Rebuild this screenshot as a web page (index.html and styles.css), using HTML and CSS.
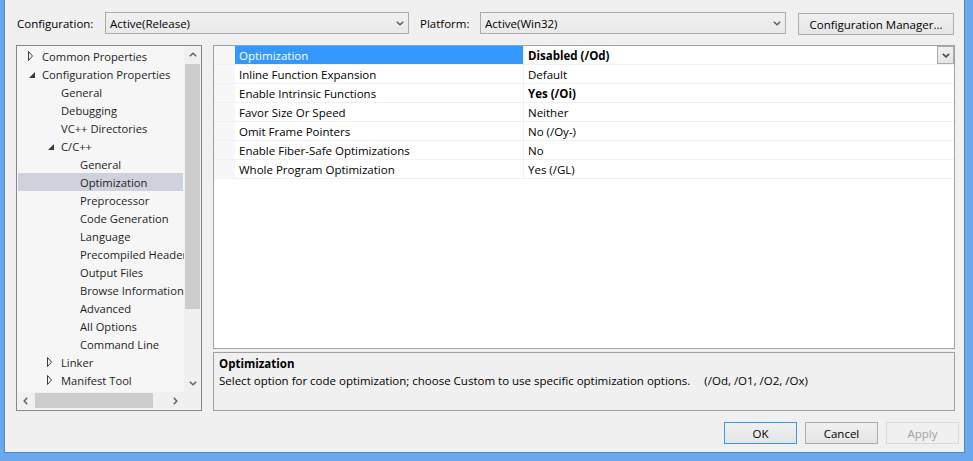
FILE: index.html
```html
<!DOCTYPE html>
<html>
<head>
<meta charset="utf-8">
<link rel="stylesheet" href="styles.css">
</head>
<body>
<div class="window">
  <div class="toolbar">
    <span class="lbl lbl-config">Configuration:</span>
    <div class="combo combo-config"><span class="combo-text">Active(Release)</span><svg class="chev" width="8" height="5" viewBox="0 0 8 5"><polyline points="0.8,0.8 4,3.8 7.2,0.8" fill="none" stroke="#5a5a5a" stroke-width="1.4"/></svg></div>
    <span class="lbl lbl-platform">Platform:</span>
    <div class="combo combo-platform"><span class="combo-text">Active(Win32)</span><svg class="chev" width="8" height="5" viewBox="0 0 8 5"><polyline points="0.8,0.8 4,3.8 7.2,0.8" fill="none" stroke="#5a5a5a" stroke-width="1.4"/></svg></div>
    <button class="btn btn-cm">Configuration Manager...</button>
  </div>

  <div class="main">
    <div class="tree">
      <div class="tree-top">
        <ul class="tree-list">
          <li class="node l0"><span class="exp"><svg width="6" height="10" viewBox="0 0 6 10"><polygon points="0.5,0.5 4.5,5 0.5,9.5" fill="none" stroke="#3a3a3a" stroke-width="1"/></svg></span>Common Properties</li>
          <li class="node l0"><span class="exp"><svg class="open" width="6" height="6" viewBox="0 0 6 6"><polygon points="6,0 6,6 0,6" fill="#3a3a3a"/></svg></span>Configuration Properties</li>
          <li class="node l1"><span class="exp"></span>General</li>
          <li class="node l1"><span class="exp"></span>Debugging</li>
          <li class="node l1"><span class="exp"></span>VC++ Directories</li>
          <li class="node l1"><span class="exp"><svg class="open" width="6" height="6" viewBox="0 0 6 6"><polygon points="6,0 6,6 0,6" fill="#3a3a3a"/></svg></span>C/C++</li>
          <li class="node l2"><span class="exp"></span>General</li>
          <li class="node l2 selected"><span class="exp"></span>Optimization</li>
          <li class="node l2"><span class="exp"></span>Preprocessor</li>
          <li class="node l2"><span class="exp"></span>Code Generation</li>
          <li class="node l2"><span class="exp"></span>Language</li>
          <li class="node l2"><span class="exp"></span>Precompiled Headers</li>
          <li class="node l2"><span class="exp"></span>Output Files</li>
          <li class="node l2"><span class="exp"></span>Browse Information</li>
          <li class="node l2"><span class="exp"></span>Advanced</li>
          <li class="node l2"><span class="exp"></span>All Options</li>
          <li class="node l2"><span class="exp"></span>Command Line</li>
          <li class="node l1"><span class="exp"><svg width="6" height="10" viewBox="0 0 6 10"><polygon points="0.5,0.5 4.5,5 0.5,9.5" fill="none" stroke="#3a3a3a" stroke-width="1"/></svg></span>Linker</li>
          <li class="node l1"><span class="exp"><svg width="6" height="10" viewBox="0 0 6 10"><polygon points="0.5,0.5 4.5,5 0.5,9.5" fill="none" stroke="#3a3a3a" stroke-width="1"/></svg></span>Manifest Tool</li>
        </ul>
        <div class="vscroll">
          <div class="sb-btn"><svg width="8" height="5" viewBox="0 0 8 5"><polyline points="0.8,4.2 4,1.2 7.2,4.2" fill="none" stroke="#606060" stroke-width="1.5"/></svg></div>
          <div class="vtrack"><div class="vthumb"></div></div>
          <div class="sb-btn"><svg width="8" height="5" viewBox="0 0 8 5"><polyline points="0.8,0.8 4,3.8 7.2,0.8" fill="none" stroke="#606060" stroke-width="1.5"/></svg></div>
        </div>
      </div>
      <div class="hscroll">
        <div class="sb-btn"><svg width="5" height="8" viewBox="0 0 5 8"><polyline points="4.2,0.8 1.2,4 4.2,7.2" fill="none" stroke="#606060" stroke-width="1.5"/></svg></div>
        <div class="htrack"><div class="hthumb"></div></div>
        <div class="sb-btn"><svg width="5" height="8" viewBox="0 0 5 8"><polyline points="0.8,0.8 3.8,4 0.8,7.2" fill="none" stroke="#606060" stroke-width="1.5"/></svg></div>
        <div class="corner"></div>
      </div>
    </div>

    <div class="right">
      <div class="grid">
        <div class="row selected">
          <div class="margin"></div>
          <div class="name">Optimization</div>
          <div class="value bold">Disabled (/Od)<div class="dd"><svg width="8" height="5" viewBox="0 0 8 5"><polyline points="0.8,0.8 4,3.8 7.2,0.8" fill="none" stroke="#4a4a4a" stroke-width="1.6"/></svg></div></div>
        </div>
        <div class="row">
          <div class="margin"></div>
          <div class="name">Inline Function Expansion</div>
          <div class="value">Default</div>
        </div>
        <div class="row">
          <div class="margin"></div>
          <div class="name">Enable Intrinsic Functions</div>
          <div class="value bold">Yes (/Oi)</div>
        </div>
        <div class="row">
          <div class="margin"></div>
          <div class="name">Favor Size Or Speed</div>
          <div class="value">Neither</div>
        </div>
        <div class="row">
          <div class="margin"></div>
          <div class="name">Omit Frame Pointers</div>
          <div class="value">No (/Oy-)</div>
        </div>
        <div class="row">
          <div class="margin"></div>
          <div class="name">Enable Fiber-Safe Optimizations</div>
          <div class="value">No</div>
        </div>
        <div class="row">
          <div class="margin"></div>
          <div class="name">Whole Program Optimization</div>
          <div class="value">Yes (/GL)</div>
        </div>
      </div>
      <div class="desc">
        <div class="desc-title">Optimization</div>
        <div class="desc-text">Select option for code optimization; choose Custom to use specific optimization options.<span class="desc-opts">(/Od, /O1, /O2, /Ox)</span></div>
      </div>
    </div>
  </div>

  <div class="buttons">
    <button class="btn btn-ok">OK</button>
    <button class="btn btn-cancel">Cancel</button>
    <button class="btn btn-apply" disabled>Apply</button>
  </div>
</div>
</body>
</html>
```

FILE: styles.css
```css
* { box-sizing: border-box; }

html, body {
  margin: 0;
  padding: 0;
}

body {
  width: 973px;
  height: 461px;
  overflow: hidden;
  background: #69a8ef;
  padding-left: 4px;
  font-family: "Open Sans", "Noto Sans", sans-serif;
  font-size: 11.5px;
  color: #000;
}

.window {
  width: 961px;
  height: 453px;
  background: #f0f0f0;
  border-left: 1px solid #5b86b8;
  border-right: 1px solid #5b86b8;
  border-bottom: 1px solid #5b86b8;
  display: flex;
  flex-direction: column;
}

/* ---------- toolbar ---------- */
.toolbar {
  display: flex;
  align-items: flex-start;
  margin-top: 12px;
  padding-left: 12px;
  height: 23px;
}

.lbl {
  line-height: 24px;
  white-space: nowrap;
}
.lbl-config { width: 88px; }
.lbl-platform { width: 60px; margin-left: 11px; }

.combo {
  height: 22px;
  border: 1px solid #acacac;
  background: linear-gradient(#f0f0f0, #e9e9e9);
  display: flex;
  align-items: center;
  justify-content: space-between;
  padding: 0 4px 0 4px;
}
.combo-config { width: 304px; }
.combo-platform { width: 306px; }
.combo-text { line-height: 20px; padding-top: 2px; }
.chev { display: block; margin-right: 0; }

.btn {
  font-family: inherit;
  font-size: 11.5px;
  color: #000;
  height: 22px;
  border: 1px solid #acacac;
  background: linear-gradient(#f0f0f0, #e5e5e5);
  padding: 2px 0 0 0;
  margin: 0;
  line-height: 18px;
}
.btn-cm {
  width: 156px;
  margin-left: 12px;
  margin-top: 1px;
}

/* ---------- main ---------- */
.main {
  display: flex;
  margin-top: 10px;
  padding-left: 11px;
  height: 366px;
}

.tree {
  width: 186px;
  height: 366px;
  border: 1px solid #828790;
  background: #f6f6f6;
  display: flex;
  flex-direction: column;
}

.tree-top {
  display: flex;
  height: 346px;
}

.tree-list {
  list-style: none;
  margin: 0;
  padding: 1px 0 0 1px;
  width: 167px;
  overflow: hidden;
  color: #1e1e1e;
  font-size: 11.2px;
}

.node {
  height: 18px;
  line-height: 19px;
  display: flex;
  align-items: flex-start;
  white-space: nowrap;
  width: 165px;
}
.node.selected { background: #cfd2dc; }
.l0 { padding-left: 10px; }
.l1 { padding-left: 29px; }
.l2 { padding-left: 48px; }

.exp {
  width: 14px;
  height: 18px;
  flex: none;
  display: flex;
  align-items: center;
}
.exp svg { display: block; }
.exp svg.open { margin-left: 1px; margin-top: 1px; }

.vscroll {
  width: 17px;
  display: flex;
  flex-direction: column;
  background: #f0f0f0;
}
.sb-btn {
  width: 17px;
  height: 17px;
  flex: none;
  display: flex;
  align-items: center;
  justify-content: center;
}
.vtrack {
  flex: 1;
  padding: 1px 1px 0 1px;
}
.vthumb {
  height: 245px;
  background: #cdcdcd;
}

.hscroll {
  height: 17px;
  display: flex;
  background: #f0f0f0;
}
.htrack {
  width: 133px;
  padding: 1px 0 1px 1px;
}
.hthumb {
  width: 118px;
  height: 15px;
  background: #cdcdcd;
}
.corner { width: 17px; }

/* ---------- right column ---------- */
.right {
  margin-left: 11px;
  width: 742px;
  display: flex;
  flex-direction: column;
}

.grid {
  height: 304px;
  border: 1px solid #a0a0a0;
  background: #fff;
}

.row {
  display: flex;
  height: 19px;
  border-bottom: 1px solid #f0f0f5;
}
.margin {
  width: 21px;
  flex: none;
  background: #f7f7f7;
}
.name {
  width: 288px;
  flex: none;
  padding-left: 4px;
  white-space: nowrap;
  line-height: 20px;
}
.row.selected .name {
  background: #3399ff;
  color: #fff;
}
.value {
  flex: 1;
  border-left: 1px solid #f0f0f5;
  padding-left: 4px;
  display: flex;
  justify-content: space-between;
  align-items: flex-start;
  white-space: nowrap;
  line-height: 20px;
}
.bold { font-weight: bold; }

.dd {
  width: 17px;
  height: 18px;
  border: 1px solid #acacac;
  background: linear-gradient(#f0f0f0, #e5e5e5);
  display: flex;
  align-items: center;
  justify-content: center;
}

.desc {
  margin-top: 3px;
  height: 59px;
  border: 1px solid #a0a0a0;
  background: #f0f0f0;
  padding: 2px 5px 0 5px;
  line-height: 17px;
}
.desc-title { font-weight: bold; }
.desc-text { white-space: nowrap; }
.desc-opts { margin-left: 14px; }

/* ---------- buttons ---------- */
.buttons {
  display: flex;
  justify-content: flex-end;
  gap: 8px;
  margin-top: 11px;
  padding-right: 5px;
}
.buttons .btn { width: 73px; }
.btn-ok { border-color: #3399ff; }
.btn-apply {
  color: #a0a0a0;
  border-color: #d9d9d9;
  background: #f0f0f0;
}
```
